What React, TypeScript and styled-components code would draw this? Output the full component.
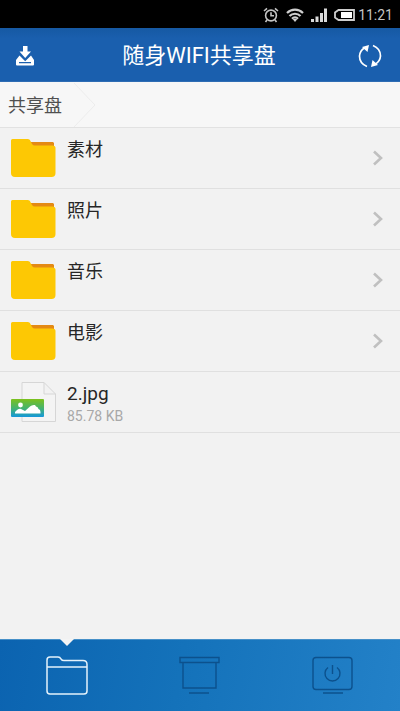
import React from 'react';
import styled, { createGlobalStyle } from 'styled-components';

const GlobalStyle = createGlobalStyle`
  * { box-sizing: border-box; }
  body {
    margin: 0;
    background: #f2f2f2;
    font-family: Roboto, "Noto Sans CJK SC", sans-serif;
  }
  button { border: 0; padding: 0; background: none; font: inherit; color: inherit; cursor: pointer; }
  svg { display: block; }
`;

const Screen = styled.div`
  display: flex;
  flex-direction: column;
  min-height: 100vh;
  background: #f2f2f2;
`;

const StatusBar = styled.div`
  display: flex;
  align-items: center;
  justify-content: flex-end;
  height: 28px;
  padding: 2px 7px 0 0;
  background: #000;
  color: #c4c4c4;
  font-size: 14px;
  line-height: 20px;
`;

const StatusIcons = styled.div`
  display: flex;
  align-items: center;
  gap: 7px;
  margin-right: 3px;
`;

const Header = styled.header`
  display: grid;
  grid-template-columns: 1fr auto 1fr;
  align-items: center;
  height: 54px;
  padding: 2px 18px 0 16px;
  background: linear-gradient(180deg, #1659a3, #1a5fae 20%);
  border-bottom: 1px solid #2f6db4;
  color: #fff;
`;

const HeaderButton = styled.button<{ $side: 'start' | 'end' }>`
  justify-self: ${(p) => p.$side};
`;

const Title = styled.h1`
  margin: 0;
  font-size: 22px;
  font-weight: 400;
  line-height: 32px;
`;

const Breadcrumb = styled.nav`
  display: flex;
  align-items: center;
  height: 46px;
  padding: 1px 0 0 8px;
  background: #f7f7f7;
  border-bottom: 1px solid #e2e2e2;
`;

const Crumb = styled.a`
  padding-top: 2px;
  color: #505050;
  font-size: 18px;
  line-height: 26px;
  text-decoration: none;
`;

const FileList = styled.ul`
  flex: 1;
  margin: 0;
  padding: 0;
  list-style: none;
`;

const Row = styled.li`
  border-bottom: 1px solid #e0e0e0;
`;

const RowButton = styled.button`
  display: flex;
  align-items: center;
  width: 100%;
  height: 60px;
  padding: 0 16px 0 10px;
  text-align: left;
`;

const RowText = styled.span`
  display: flex;
  flex: 1;
  flex-direction: column;
  align-self: stretch;
  padding: 9px 0 0 10px;
`;

const Name = styled.span<{ $file: boolean }>`
  color: #262626;
  font-size: ${(p) => (p.$file ? '19px' : '18px')};
  line-height: 26px;
`;

const Size = styled.span`
  color: #a8a8a8;
  font-size: 14px;
  line-height: 18px;
`;

const TabBar = styled.nav`
  display: flex;
  height: 72px;
  background: linear-gradient(100deg, #0b63b0 0%, #1472ba 45%, #2381c8 100%);
  border-top: 1px solid #4690c8;
`;

const Tab = styled.button<{ $active?: boolean }>`
  position: relative;
  display: flex;
  flex: 1;
  align-items: center;
  justify-content: center;
  color: ${(p) => (p.$active ? '#e4f2fc' : '#0c518d')};

  &::before {
    content: '';
    display: ${(p) => (p.$active ? 'block' : 'none')};
    position: absolute;
    top: -1px;
    left: calc(50% - 7px);
    border: 7px solid transparent;
    border-bottom-width: 0;
    border-top-color: #f4f4f4;
  }
`;

const AlarmIcon = () => (
  <svg width="16" height="16" viewBox="0 0 16 16" fill="none" stroke="#c4c4c4" strokeWidth="1.6">
    <circle cx="8" cy="8.5" r="5.4" />
    <path d="M8 5.2v3.6h3M1 4l3-2.6M15 4l-3-2.6M4 13l-1.5 2M12 13l1.5 2" />
  </svg>
);

const WifiIcon = () => (
  <svg width="18" height="14" viewBox="0 0 18 14" fill="none" stroke="#cfcfcf" strokeWidth="2.2">
    <path d="M1 5C5.500.6 12.500.6 17 5M3.500 8c3-3 8-3 11 0M6 10.700c1.700-1.700 4.300-1.700 6 0" />
    <path d="M6.800 11.300 9 14l2.200-2.700Q9 9.800 6.800 11.300z" fill="#cfcfcf" stroke="none" />
  </svg>
);

const SignalIcon = () => (
  <svg width="16" height="14" viewBox="0 0 16 14" fill="#dadada">
    <path d="M0 11h3v3H0zM4.500 8.500h3V14h-3zM9 5h3v9H9zM13 0.500h3V14h-3z" />
  </svg>
);

const BatteryIcon = () => (
  <svg width="21" height="12" viewBox="0 0 21 12">
    <path d="M4.500 1H20v10H4.500L1 8.500v-5z" fill="none" stroke="#cfcfcf" strokeWidth="1.800" />
    <path d="M7 3h11v6H7z" fill="#fff" />
  </svg>
);

const DownloadIcon = () => (
  <svg width="18" height="20" viewBox="0 0 18 20" fill="#fff">
    <path d="M7 0h4.500v5.500H15L9.200 12 3.500 5.500H7z" />
    <path d="M3.500 9.500 9.200 15.300 15 9.500l3 4.500v4.500q0 1-1 1H1q-1 0-1-1V14zM3 16v1.300h12V16z" fillRule="evenodd" />
  </svg>
);

const RefreshIcon = () => (
  <svg width="24" height="24" viewBox="0 0 24 24" fill="none" stroke="#fff" strokeWidth="1.700">
    <path d="M9 22.500Q1.500 19.500 1.500 12 2 6.500 6.500 4M15 1.500Q22.500 4.500 22.500 12 22 17.500 17.500 20" />
    <path d="M4 3 11 1 9.500 8z M20 21 13 23l1.500-7z" fill="#fff" stroke="none" />
  </svg>
);

const CrumbArrow = () => (
  <svg width="38" height="44" viewBox="0 0 38 44" fill="none" stroke="#ececec">
    <path d="M12 0 33 22 12 44" />
  </svg>
);

const FolderIcon = () => (
  <svg width="47" height="40" viewBox="0 0 47 40">
    <path d="M18 4h25l1 1v8H23z" fill="#e48a14" />
    <path d="M1 2.500Q1 1 2.500 1H18q2 0 3 3l1 2q1 1.500 3 1.500h17.500Q45.500 7.500 45.500 10v25q0 4-4 4H5q-4 0-4-4z" fill="#fdc804" />
  </svg>
);

const ImageFileIcon = () => (
  <svg width="47" height="42" viewBox="0 0 47 42">
    <defs>
      <linearGradient id="photo" x1="0" y1="0" x2="0" y2="1">
        <stop offset="0" stopColor="#7cc11c" />
        <stop offset="0.500" stopColor="#46b46c" />
        <stop offset="1" stopColor="#1597dc" />
      </linearGradient>
    </defs>
    <path d="M12 1.500h22L45.500 13v27.500H12zM34 1.500V13h11.500" fill="#f4f4f4" stroke="#d6d6d6" />
    <rect x="1" y="18" width="33" height="18" rx="1" fill="url(#photo)" />
    <circle cx="10.500" cy="24" r="2.400" fill="#fff" />
    <path d="M5 32.500V31q1-1 2-2 3-2 5-.5l3 1.500 5-4.500q2-2 5-1.500l1 1.500q2 0 2.500 2.500 2 .5 2 3v1.500z" fill="#fff" />
  </svg>
);

const ChevronIcon = () => (
  <svg width="12" height="16" viewBox="0 0 12 16" fill="none" stroke="#c0c0c0" strokeWidth="2.600">
    <path d="M2 1.500 9 8l-7 6.500" />
  </svg>
);

const FolderTabIcon = () => (
  <svg width="42" height="40" viewBox="0 0 42 40" fill="none" stroke="currentColor" strokeWidth="1.500">
    <path d="M1 35V4q0-3 3-3h8q2 0 3 2 1 1.500 3 1.500h19q4 0 4 4V35q0 3-3 3H4q-3 0-3-3zM1 11h40" />
  </svg>
);

const ScreenTabIcon = () => (
  <svg width="42" height="40" viewBox="0 0 42 40" fill="none" stroke="currentColor" strokeWidth="1.400">
    <path d="M1 1.500h39v5H1zM4 6.500v25.500h33V6.500M10 37h20" />
  </svg>
);

const PowerTabIcon = () => (
  <svg width="42" height="40" viewBox="0 0 42 40" fill="none" stroke="currentColor" strokeWidth="1.400">
    <rect x="1" y="1.500" width="39" height="32" rx="3" />
    <path d="M11 37h20M20.500 9v9M16 11.500a7.500 7.500 0 1 0 9 0" />
  </svg>
);

const entries = [
  { name: '素材' },
  { name: '照片' },
  { name: '音乐' },
  { name: '电影' },
  { name: '2.jpg', size: '85.78 KB' },
];

export default function App() {
  return (
    <Screen>
      <GlobalStyle />
      <StatusBar>
        <StatusIcons>
          <AlarmIcon />
          <WifiIcon />
          <SignalIcon />
          <BatteryIcon />
        </StatusIcons>
        <span>11:21</span>
      </StatusBar>
      <Header>
        <HeaderButton type="button" $side="start" aria-label="下载"><DownloadIcon /></HeaderButton>
        <Title>随身WIFI共享盘</Title>
        <HeaderButton type="button" $side="end" aria-label="刷新"><RefreshIcon /></HeaderButton>
      </Header>
      <Breadcrumb>
        <Crumb href="#">共享盘</Crumb>
        <CrumbArrow />
      </Breadcrumb>
      <FileList>
        {entries.map((entry) => (
          <Row key={entry.name}>
            <RowButton type="button">
              {entry.size ? <ImageFileIcon /> : <FolderIcon />}
              <RowText>
                <Name $file={Boolean(entry.size)}>{entry.name}</Name>
                {entry.size && <Size>{entry.size}</Size>}
              </RowText>
              {!entry.size && <ChevronIcon />}
            </RowButton>
          </Row>
        ))}
      </FileList>
      <TabBar>
        <Tab type="button" $active aria-label="文件"><FolderTabIcon /></Tab>
        <Tab type="button" aria-label="投屏"><ScreenTabIcon /></Tab>
        <Tab type="button" aria-label="电源"><PowerTabIcon /></Tab>
      </TabBar>
    </Screen>
  );
}
